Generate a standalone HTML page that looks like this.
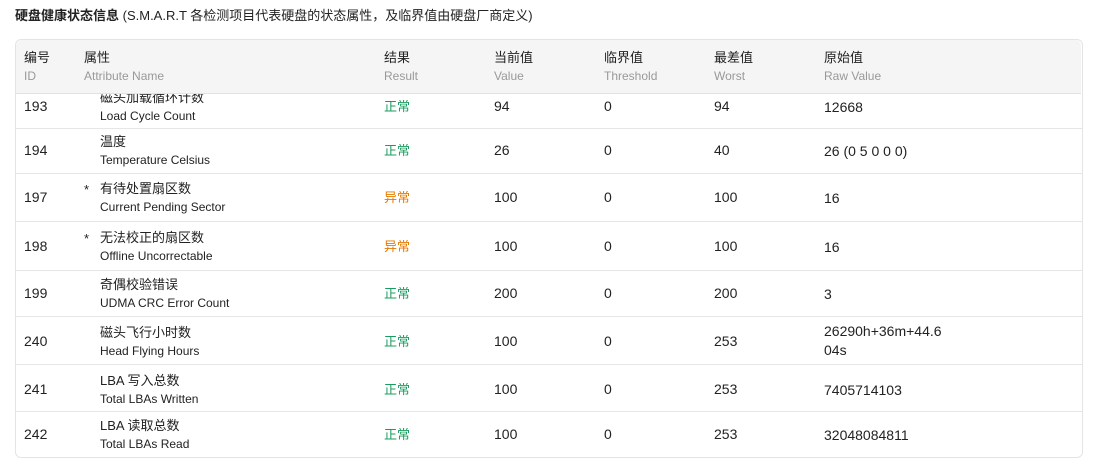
<!DOCTYPE html>
<html><head><meta charset="utf-8"><style>
body{margin:0;width:1094px;height:467px;background:#fff;font-family:"Liberation Sans","Noto Sans CJK SC",sans-serif;color:#222;position:relative;overflow:hidden}
.t{position:absolute;white-space:nowrap;line-height:1;z-index:2}
.card{position:absolute;left:15px;top:39px;width:1066px;height:417px;border:1px solid #e4e4e4;border-radius:6px;overflow:hidden}
.hd{position:absolute;left:16px;top:40px;width:1066px;height:53px;background:#f5f5f5;border-bottom:1px solid #e2e2e2;border-radius:6px 6px 0 0;z-index:3}
.ln{position:absolute;left:0;width:100%;height:1px;background:#e6e6e6}
.h1{font-size:13px;color:#222;z-index:4}.h2{font-size:12px;color:#999;z-index:4}
.v{font-size:14px}.cn{font-size:13px}.en{font-size:12px}
.ok{color:#1a9c5e;font-size:13px}.bad{color:#e67a00;font-size:13px}
</style></head><body>
<div class="t" style="left:15px;top:9px;font-size:13px"><b>硬盘健康状态信息</b> (S.M.A.R.T 各检测项目代表硬盘的状态属性，及临界值由硬盘厂商定义)</div>
<div class="card">
<div class="ln" style="top:88px"></div>
<div class="ln" style="top:133px"></div>
<div class="ln" style="top:181px"></div>
<div class="ln" style="top:230px"></div>
<div class="ln" style="top:276px"></div>
<div class="ln" style="top:324px"></div>
<div class="ln" style="top:371px"></div>
</div>
<div class="hd" style="left:16px;width:1065px"></div>
<div id="c"></div>
<script>
var H=[["编号","ID",24],["属性","Attribute Name",84],["结果","Result",384],["当前值","Value",494],["临界值","Threshold",604],["最差值","Worst",714],["原始值","Raw Value",824]];
var s="";
H.forEach(function(h){s+='<div class="t h1" style="left:'+h[2]+'px;top:51px">'+h[0]+'</div><div class="t h2" style="left:'+h[2]+'px;top:70px">'+h[1]+'</div>';});
var R=[["193","","磁头加载循环计数","Load Cycle Count",1,"94","0","94","12668",106],
["194","","温度","Temperature Celsius",1,"26","0","40","26 (0 5 0 0 0)",150],
["197","*","有待处置扇区数","Current Pending Sector",0,"100","0","100","16",197],
["198","*","无法校正的扇区数","Offline Uncorrectable",0,"100","0","100","16",246],
["199","","奇偶校验错误","UDMA CRC Error Count",1,"200","0","200","3",293],
["240","","磁头飞行小时数","Head Flying Hours",1,"100","0","253","26290h+36m+44.6<br>04s",341],
["241","","LBA 写入总数","Total LBAs Written",1,"100","0","253","7405714103",389],
["242","","LBA 读取总数","Total LBAs Read",1,"100","0","253","32048084811",434]];
R.forEach(function(r){var y=r[9];
s+='<div class="t v" style="left:24px;top:'+(y-7)+'px">'+r[0]+'</div>';
if(r[1])s+='<div class="t cn" style="left:84px;top:'+(y-14)+'px">*</div>';
s+='<div class="t cn" style="left:100px;top:'+(y-15)+'px">'+r[2]+'</div>';
s+='<div class="t en" style="left:100px;top:'+(y+4)+'px">'+r[3]+'</div>';
s+='<div class="t '+(r[4]?'ok':'bad')+'" style="left:384px;top:'+(y-6)+'px">'+(r[4]?'正常':'异常')+'</div>';
s+='<div class="t v" style="left:494px;top:'+(y-7)+'px">'+r[5]+'</div>';
s+='<div class="t v" style="left:604px;top:'+(y-7)+'px">'+r[6]+'</div>';
s+='<div class="t v" style="left:714px;top:'+(y-7)+'px">'+r[7]+'</div>';
if(r[8].indexOf("<br>")>0)s+='<div class="t v" style="left:824px;top:'+(y-19)+'px;line-height:19px">'+r[8]+'</div>';
else s+='<div class="t v" style="left:824px;top:'+(y-6)+'px">'+r[8]+'</div>';});
document.getElementById("c").innerHTML=s;
</script>
</body></html>
